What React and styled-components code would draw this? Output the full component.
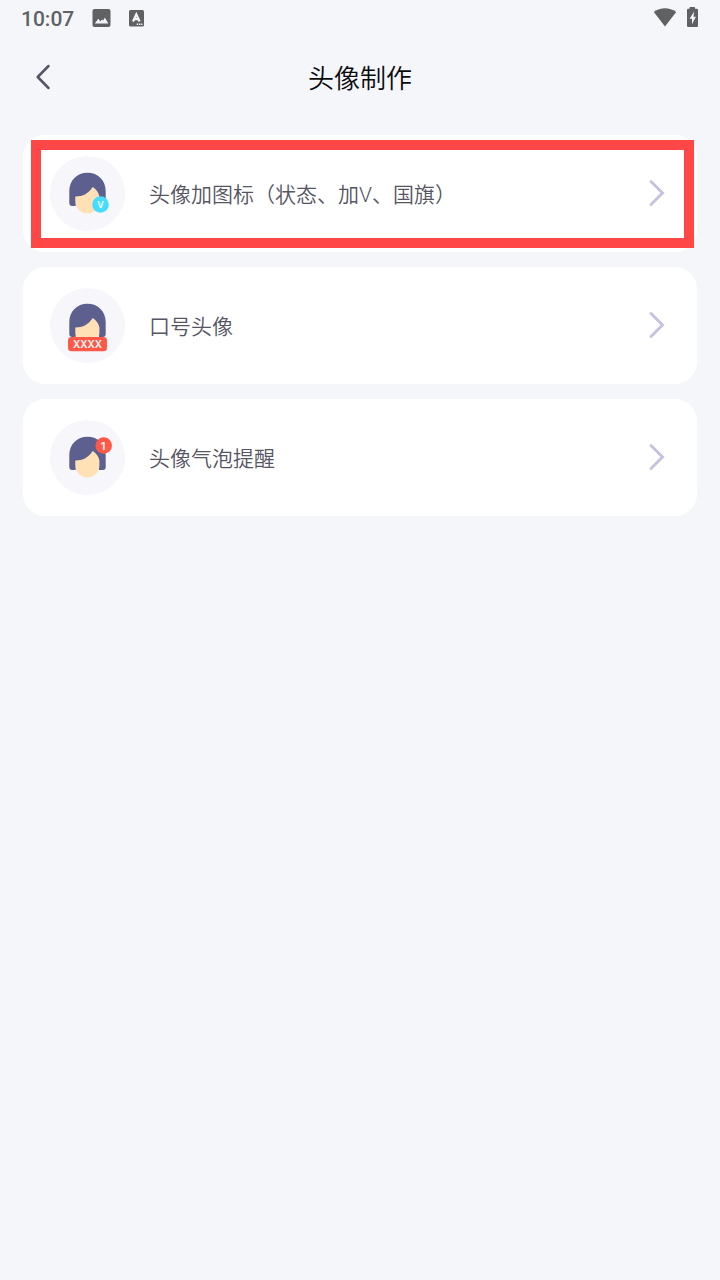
import styled, { createGlobalStyle } from "styled-components";

const GlobalStyle = createGlobalStyle`
  * {
    box-sizing: border-box;
  }
  body {
    margin: 0;
    min-height: 100vh;
    background-color: #f4f6fa;
    font-family: Roboto, "Noto Sans CJK SC", sans-serif;
  }
`
const StatusBar = styled.div`
  display: flex;
  align-items: center;
  justify-content: space-between;
  height: 36px;
  padding: 0 21px;
  color: #606163;
`
const StatusGroup = styled.div`
  display: flex;
  align-items: center;
  gap: ${({ $gap }) => $gap}px;
`
const Time = styled.span`
  padding-top: 2px;
  font-size: 21px;
  font-weight: 500;
  line-height: 34px;
`
const Header = styled.header`
  display: grid;
  grid-template-columns: 40px 1fr 40px;
  align-items: center;
  height: 84px;
  padding: 0 24px;
`
const BackButton = styled.button`
  display: flex;
  align-items: center;
  justify-content: center;
  height: 40px;
  padding: 0 2px 2px 0;
  border: none;
  background: none;
  cursor: pointer;
`
const Title = styled.h1`
  margin: 0;
  padding-top: 2px;
  color: #0b0b0d;
  font-size: 26px;
  font-weight: 350;
  line-height: 40px;
  text-align: center;
`
const OptionList = styled.ul`
  display: flex;
  flex-direction: column;
  gap: 15px;
  margin: 0;
  padding: 15px 23px;
  list-style: none;
`
const Option = styled.li`
  position: relative;
`
const OptionLink = styled.a`
  display: flex;
  align-items: center;
  padding: 21px 31px 21px 27px;
  border-radius: 22px;
  background-color: white;
  color: #565564;
  text-decoration: none;
`
const Highlight = styled.span`
  position: absolute;
  inset: 5px 3px 4px 8px;
  border: 10px solid #ff4747;
  pointer-events: none;
`
const OptionLabel = styled.span`
  flex: 1;
  margin-left: 24px;
  padding-top: 2px;
  font-size: 21px;
  font-weight: 350;
  line-height: 32px;
`
const Chevron = styled.svg`
  width: 18px;
  height: 28px;
  margin-bottom: 2px;
`
const Avatar = styled.svg`
  display: block;
  width: 75px;
  height: 75px;
  border-radius: 50%;
  background-color: #f6f6fb;
`
const BadgeText = styled.text`
  fill: white;
  font-family: Inter, sans-serif;
  font-size: ${({ $size }) => $size}px;
  font-weight: 600;
  text-anchor: middle;
`

const options = [
  { label: '头像加图标（状态、加V、国旗）', badge: 'verified', headY: 0, highlighted: true },
  { label: '口号头像', badge: 'slogan', headY: -1 },
  { label: '头像气泡提醒', badge: 'bubble', headY: 0 },
];

function Badge({ type }) {
  if (type === 'verified') {
    return (
      <g>
        <circle cx="50.5" cy="48.5" r="8.3" fill="#45dcff" />
        <BadgeText x="50.5" y="52" $size={9}>V</BadgeText>
      </g>
    )
  }
  if (type === 'slogan') {
    return (
      <g>
        <rect x="18" y="49" width="39" height="14.3" rx="3.5" fill="#ff5848" />
        <BadgeText x="37.5" y="60" $size={10}>XXXX</BadgeText>
      </g>
    )
  }
  return (
    <g>
      <circle cx="53.7" cy="25.5" r="8.3" fill="#ff5848" />
      <BadgeText x="53.2" y="29.5" $size={11}>1</BadgeText>
    </g>
  )
}

function HeadAvatar({ badge, headY }) {
  return (
    <Avatar viewBox="0 0 75 75" aria-hidden="true">
      <g transform={`translate(0 ${headY})`}>
        <path
          d="M19.3 47V35C19.3 24.5 27 16.8 37.5 16.8S55.7 24.5 55.7 35V47Q55.7 50 52.7 50H49V42H26V49.5Q24.5 50 22.3 50Q19.3 50 19.3 47Z"
          fill="#5d5f8e"
        />
        <path
          d="M25.3 40.5C33 40.5 38.5 37.5 42.7 31C46 33 48.7 36.5 49.4 40.5V45.5C49.4 52.5 44 57.4 37.4 57.4S25.3 52.5 25.3 45.5Z"
          fill="#ffe1b5"
        />
      </g>
      <Badge type={badge} />
    </Avatar>
  )
}

export default function App() {
  return (
    <>
      <GlobalStyle />
      <StatusBar>
        <StatusGroup $gap={18}>
          <Time>10:07</Time>
          <svg width="19" height="18" viewBox="0 0 19 18" aria-hidden="true">
            <rect x="0.5" width="18" height="18" rx="2" fill="currentColor" />
            <path d="M2.8 14.5L6.3 9.7L8.5 12.4L10 10.4L11.3 11.6L12.8 8.6L16.3 14.5Z" fill="#f4f6fa" />
          </svg>
          <svg width="15" height="17" viewBox="0 0 15 17" aria-hidden="true">
            <rect width="15" height="16.5" rx="1.5" fill="currentColor" />
            <path d="M4 11.5L7.3 4.3L10.6 11.5M5.3 9.2H9.3" fill="none" stroke="#f4f6fa" strokeWidth="2.2" />
            <path d="M7.7 14.3H14" stroke="#f4f6fa" strokeWidth="1.4" strokeDasharray="1.4 0.8" />
          </svg>
        </StatusGroup>
        <StatusGroup $gap={9}>
          <svg width="24" height="20" viewBox="0 0 24 20" aria-hidden="true">
            <path d="M0.8 4C7.5 -1 16.5 -1 23.2 4L12 18.6Z" fill="currentColor" />
          </svg>
          <svg width="13" height="22" viewBox="0 0 13 22" aria-hidden="true">
            <path
              d="M3.5 0.4Q3.5 0 4 0H8.4Q9 0 9 0.5V1.8H10.7Q12 1.8 12 3.1V18.7Q12 20 10.7 20H2.3Q1 20 1 18.7V3.1Q1 1.8 2.3 1.8H3.5Z"
              fill="currentColor"
            />
            <path d="M8.2 4.5L3.6 11.8H6V17.3L9.9 9.7H7.5Z" fill="#f4f6fa" />
          </svg>
        </StatusGroup>
      </StatusBar>

      <Header>
        <BackButton type="button" aria-label="返回">
          <svg width="16" height="26" viewBox="0 0 16 26" aria-hidden="true">
            <path
              d="M13.5 2L2.7 13L13.5 24"
              fill="none"
              stroke="#555468"
              strokeWidth="2.5"
              strokeLinecap="round"
              strokeLinejoin="round"
            />
          </svg>
        </BackButton>
        <Title>头像制作</Title>
      </Header>

      <OptionList>
        {
          options.map((option) => (
            <Option key={option.badge}>
              <OptionLink href="#">
                <HeadAvatar badge={option.badge} headY={option.headY} />
                <OptionLabel>{option.label}</OptionLabel>
                <Chevron viewBox="0 0 18 28" aria-hidden="true">
                  <path d="M3 2.5L14.5 14L3 25.5" fill="none" stroke="#c6c3e0" strokeWidth="3" strokeLinecap="round" />
                </Chevron>
              </OptionLink>
              {option.highlighted && <Highlight />}
            </Option>
          ))
        }
      </OptionList>
    </>
  )
}
